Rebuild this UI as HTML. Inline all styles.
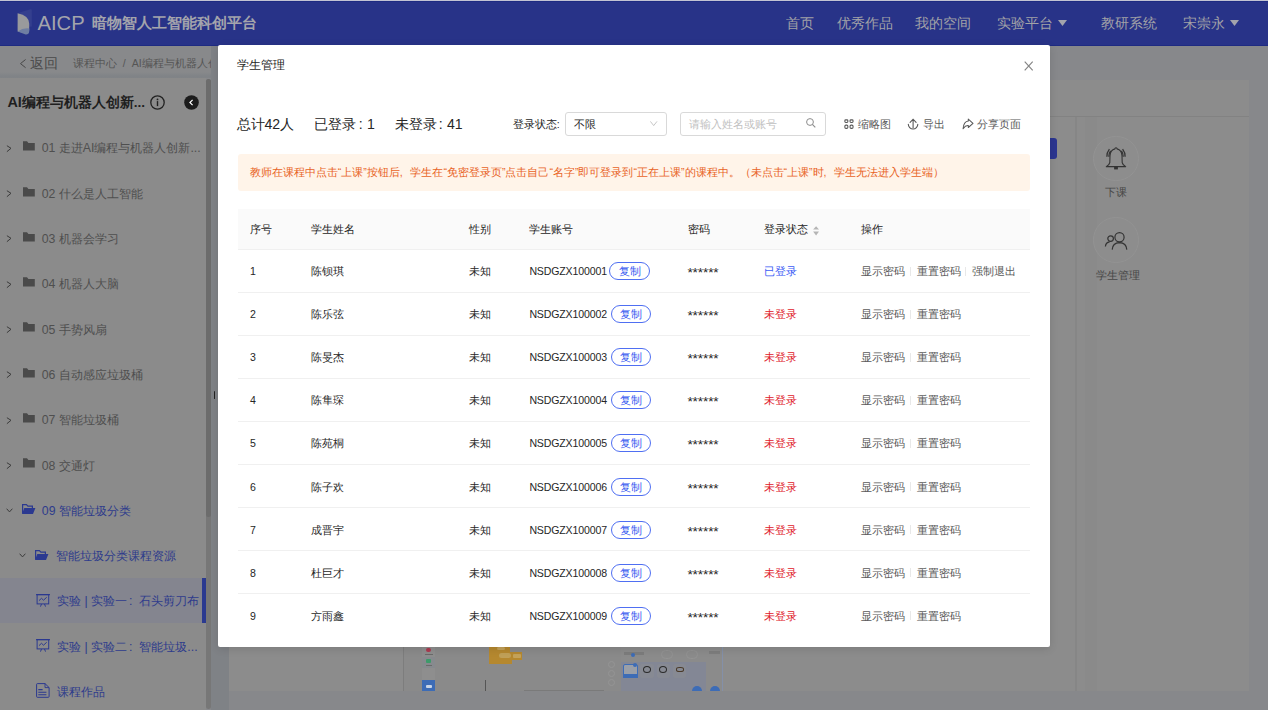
<!DOCTYPE html>
<html><head><meta charset="utf-8">
<style>
*{margin:0;padding:0;box-sizing:border-box}
html,body{width:1268px;height:710px;overflow:hidden;background:#87888b;font-family:"Liberation Sans",sans-serif;}
.a,.m{position:absolute;white-space:nowrap}
#topline{left:0;top:0;width:1268px;height:1px;background:#c2c3d3}
#hdr{left:0;top:1px;width:1268px;height:45px;background:#283388;border-top:1px solid #1e2b82;border-bottom:1px solid #1e2b82}
.hd{color:#a2a2a7;font-size:13.65px;line-height:16px;top:15.6px}
#crumb{left:0;top:46px;width:213px;height:32px;background:linear-gradient(#88898b 0,#88898b 26px,#808387 30px,#818487 33px)}
#side{left:0;top:78px;width:206px;height:632px;background:#8b8b8b}
#card{left:229px;top:80px;width:1020px;height:611px;background:#8c8c8c}
#modal{left:218px;top:45px;width:832px;height:602px;background:#fff;border-radius:2px;overflow:hidden;box-shadow:0 2px 8px rgba(0,0,0,.12)}
.t12{font-size:10.57px;line-height:14px}
.sb{color:#4f4f4f;font-size:12.3px;line-height:16px}
.sbl{color:#2e3b8c;font-size:12.3px;line-height:16px}
.st{font-size:14.09px;line-height:18px;color:#262626;top:70px}
.tool{font-size:10.57px;line-height:14px;color:#595959;top:72px}
.th{font-size:10.57px;line-height:14px;color:#262626}
.td{font-size:10.57px;line-height:14px;color:#262626}
.op{font-size:10.57px;line-height:14px;color:#595959}
.copy{border:1px solid #4f6ff2;border-radius:9px;width:40.5px;height:18px;color:#3858f0;font-size:10.57px;line-height:16px;text-align:center;font-weight:500}
.line{height:1px;background:#f0f0f0}
</style></head><body>
<div class="a" id="topline"></div>
<div class="a" id="hdr"></div>
<svg class="a" style="left:0;top:0" width="45" height="45" viewBox="0 0 45 45">
  <path d="M19.5 12.5L30.4 9.3Q31.8 9 31.8 10.4V26.5L19.5 28Z" fill="#343f8e"/>
  <path d="M17.6 13.3Q29.2 15.6 29.2 23.8V30Q29.2 33.2 26 33.2L17.6 31.6Z" fill="#999a9c"/>
  <path d="M17.6 31.4Q23 27.6 29.2 28.4V31.6Q29 34.8 25.6 34.6Z" fill="#6f7ea2"/>
</svg>
<div class="a" style="left:37.5px;top:10.7px;font-size:20.2px;line-height:24px;color:#a3a4ac">AICP</div>
<div class="a" style="left:92px;top:13px;font-size:15.1px;line-height:19px;color:#a3a4ac;font-weight:bold">暗物智人工智能科创平台</div>
<div class="a hd" style="left:786px">首页</div>
<div class="a hd" style="left:837px">优秀作品</div>
<div class="a hd" style="left:915px">我的空间</div>
<div class="a hd" style="left:997px">实验平台</div>
<svg class="a" style="left:1058px;top:20px" width="9" height="7"><path d="M0 0H9L4.5 6Z" fill="#a3a4ac"/></svg>
<div class="a hd" style="left:1101px">教研系统</div>
<div class="a hd" style="left:1183px">宋崇永</div>
<svg class="a" style="left:1230px;top:20px" width="9" height="7"><path d="M0 0H9L4.5 6Z" fill="#a3a4ac"/></svg>

<div class="a" id="crumb"></div>
<svg class="a" style="left:19px;top:58px" width="8" height="11" viewBox="0 0 8 11"><path d="M6.6 1.5L1.5 5.6L6.6 9.7" fill="none" stroke="#474747" stroke-width="1"/></svg>
<div class="a" style="left:30.3px;top:53.5px;font-size:14.09px;line-height:18px;color:#4a4a4a">返回</div>
<div class="a" style="left:73px;top:57px;font-size:10.57px;line-height:13px;color:#555">课程中心 &nbsp;/&nbsp; AI编程与机器人创新</div>
<div class="a" id="side"></div>
<div class="a" id="card"></div>
<div class="a" style="left:229px;top:116px;width:1020px;height:1px;background:#828282"></div>
<div class="a" style="left:1075px;top:117px;width:2px;height:574px;background:#868686"></div>
<div class="a" style="left:1085px;top:117px;width:12px;height:574px;background:#8a8a8a"></div>
<div class="a" style="left:1043px;top:138px;width:14px;height:21px;background:#2b3590;border-radius:3px"></div>
<div class="a" style="left:1093.2px;top:135.8px;width:45.6px;height:45.6px;border-radius:50%;border:1px solid #939393;background:#8d8d8d"></div>
<div class="a" style="left:1093.2px;top:217.4px;width:45.6px;height:45.6px;border-radius:50%;border:1px solid #939393;background:#8d8d8d"></div>
<svg class="a" style="left:1104px;top:146px" width="24" height="25" viewBox="0 0 24 25"><g fill="none" stroke="#333" stroke-width="1.1" stroke-linejoin="round"><path d="M11.9 1.7Q11 1.7 10.9 2.9Q6.4 4 6 9.6L5.8 16.6Q5.5 18.6 2.3 20.6H21.7Q18.5 18.6 18.2 16.6L18 9.6Q17.6 4 13.1 2.9Q13 1.7 12.1 1.7Z"/><path d="M2.9 10.8Q2.7 6.4 5.4 3.1M4.8 10.8Q4.7 7.4 6.6 4.9M21.1 10.8Q21.3 6.4 18.6 3.1M19.2 10.8Q19.3 7.4 17.4 4.9" stroke-width="1.3"/></g><rect x="10.1" y="20.6" width="3.8" height="2.8" fill="#333"/></svg>
<div class="a" style="left:1105px;top:184.3px;font-size:10.57px;line-height:16px;color:#474747">下课</div>
<svg class="a" style="left:1103.5px;top:230.5px" width="26" height="20" viewBox="0 0 26 20"><g fill="none" stroke="#333" stroke-width="1.2"><circle cx="15.5" cy="6.3" r="4.6"/><path d="M8.2 18.6Q8.6 11.9 15.5 11.7Q22.4 11.9 22.8 18.6"/><circle cx="6.6" cy="7.6" r="2.8"/><path d="M1.4 15.5Q1.8 11.4 5.6 10.9"/></g></svg>
<div class="a" style="left:1095.5px;top:266.8px;font-size:10.57px;line-height:16px;color:#474747">学生管理</div>
<div class="a" style="left:403px;top:600px;width:321px;height:91px;overflow:hidden">
<div class="a" style="left:0px;top:0px;width:320px;height:91px;background:#8a8a8a;border-left:1px solid #7d7d7d"></div>
<div class="a" style="left:19px;top:0px;width:13px;height:91px;background:#8e8e8e"></div>
<div class="a" style="left:19px;top:57px;width:13px;height:11px;background:#878a8e"></div>
<div class="a" style="left:19px;top:80px;width:13px;height:11.5px;background:#3d6cb6"></div>
<div class="a" style="left:23.3px;top:47.6px;width:4.6px;height:4.6px;border-radius:50%;background:#ad3a50"></div>
<div class="a" style="left:21.5px;top:54px;width:8px;height:1.2px;background:#6a6a6a"></div>
<div class="a" style="left:22.5px;top:64.8px;width:6px;height:1.2px;background:#6a6a6a"></div>
<div class="a" style="left:23px;top:84.5px;width:6px;height:3px;background:#c8d4e6;border-radius:1px"></div>
<div class="a" style="left:23px;top:59px;width:5px;height:3.5px;border-radius:1px;background:#3d9a6a"></div>
<div class="a" style="left:82px;top:80px;width:1px;height:11px;background:#555"></div>
<div class="a" style="left:86.3px;top:0px;width:20.5px;height:52px;background:#b5882f"></div>
<div class="a" style="left:86.3px;top:52px;width:33px;height:7.5px;background:#b5882f"></div>
<div class="a" style="left:86.3px;top:59.5px;width:22.4px;height:4.2px;background:#b5882f"></div>
<div class="a" style="left:94px;top:47px;width:8px;height:3px;background:#c4a25a;border-radius:2px"></div>
<div class="a" style="left:96px;top:53.3px;width:12px;height:4.5px;background:#c0a058;border-radius:3px"></div>
<div class="a" style="left:109.5px;top:53.5px;width:8px;height:4px;background:#c4a25a;border-radius:1px"></div>
<div class="a" style="left:121px;top:89.5px;width:80px;height:1.5px;background:#7a7a7a"></div>
<div class="a" style="left:204.5px;top:61px;width:7px;height:7px;border-radius:50%;border:1px solid #959595"></div>
<div class="a" style="left:204.5px;top:70.4px;width:7px;height:7px;border-radius:50%;border:1px solid #959595"></div>
<div class="a" style="left:204.5px;top:79.3px;width:7px;height:7px;border-radius:50%;border:1px solid #959595"></div>
<div class="a" style="left:217.5px;top:0px;width:85.6px;height:91px;background:#838795"></div>
<div class="a" style="left:218px;top:0px;width:84.5px;height:62px;background:#8b8b8b"></div>
<div class="a" style="left:221px;top:52px;width:20px;height:3px;background:#7c7c7c"></div>
<div class="a" style="left:228px;top:53px;width:4px;height:4px;border-radius:50%;background:#3d6cb6"></div>
<div class="a" style="left:258px;top:50px;width:12px;height:9px;border-radius:5px;border:1px solid #939393"></div>
<div class="a" style="left:283px;top:50px;width:12px;height:9px;border-radius:5px;border:1px solid #939393"></div>
<div class="a" style="left:220px;top:64px;width:14.5px;height:14px;background:#9a9fa8;border:1px solid #3d6cb6;border-radius:2px"></div>
<div class="a" style="left:220px;top:74px;width:14.5px;height:4px;background:#3d6cb6"></div>
<div class="a" style="left:230px;top:63px;width:4px;height:4px;border-radius:50%;background:#3d6cb6"></div>
<div class="a" style="left:237px;top:64px;width:13.8px;height:14px;background:#878a93;border-radius:2px"></div>
<div class="a" style="left:253.5px;top:64px;width:13.5px;height:14px;background:#878a93;border-radius:2px"></div>
<div class="a" style="left:269.5px;top:64px;width:13.5px;height:14px;background:#878a93;border-radius:2px"></div>
<div class="a" style="left:239.5px;top:65.5px;width:8px;height:7px;border-radius:50%;border:1.5px solid #2a2a2a"></div>
<div class="a" style="left:256px;top:65.5px;width:8px;height:7px;border-radius:50%;border:1.5px solid #2a2a2a"></div>
<div class="a" style="left:272.5px;top:66.5px;width:8px;height:5px;border-radius:40%;border:1.5px solid #4a3a2a"></div>
<div class="a" style="left:303px;top:0px;width:17px;height:91px;background:#8b8b8b;border-right:1px solid #8490a8"></div>
<div class="a" style="left:306px;top:51px;width:11px;height:3px;background:#7d7d7d"></div>
<div class="a" style="left:289px;top:86px;width:10px;height:10px;border-radius:50%;background:#3d6cb6"></div>
<div class="a" style="left:306.8px;top:86px;width:10px;height:10px;border-radius:50%;background:#3d6cb6"></div>
</div>
<div class="a" style="left:210px;top:691px;width:1058px;height:19px;background:#87888b"></div>

<div class="a" style="left:7.4px;top:93.3px;font-size:13.6px;line-height:18px;color:#1f1f1f;font-weight:bold"><span style="font-size:14.4px">AI</span>编程与机器人创新...</div>
<svg class="a" style="left:149.5px;top:94.5px" width="15" height="15" viewBox="0 0 15 15"><circle cx="7.5" cy="7.5" r="6.7" fill="none" stroke="#222" stroke-width="1.3"/><circle cx="7.5" cy="4.4" r="0.9" fill="#222"/><rect x="6.8" y="6.1" width="1.4" height="5" fill="#222"/></svg>
<svg class="a" style="left:183.5px;top:94.5px" width="15" height="15" viewBox="0 0 15 15"><circle cx="7.5" cy="7.5" r="7.3" fill="#1c1c1c"/><path d="M8.6 4.8L5.9 7.5L8.6 10.2" fill="none" stroke="#fff" stroke-width="1.2"/></svg>
<svg class="a" style="left:6px;top:144.7px" width="6" height="8" viewBox="0 0 6 8"><path d="M0.9 0.7L5 3.3L0.9 6.7" fill="none" stroke="#3c3c3c" stroke-width="1"/></svg>
<svg class="a" style="left:22.9px;top:141.2px" width="12" height="10" viewBox="0 0 12 10"><path d="M0 0.2H4L5.4 2.1H11.8V9.6H0Z" fill="#4a4a4a"/></svg>
<div class="a sb" style="left:41.7px;top:140.4px">01 走进AI编程与机器人创新...</div>
<svg class="a" style="left:6px;top:190.0px" width="6" height="8" viewBox="0 0 6 8"><path d="M0.9 0.7L5 3.3L0.9 6.7" fill="none" stroke="#3c3c3c" stroke-width="1"/></svg>
<svg class="a" style="left:22.9px;top:186.5px" width="12" height="10" viewBox="0 0 12 10"><path d="M0 0.2H4L5.4 2.1H11.8V9.6H0Z" fill="#4a4a4a"/></svg>
<div class="a sb" style="left:41.7px;top:185.7px">02 什么是人工智能</div>
<svg class="a" style="left:6px;top:235.3px" width="6" height="8" viewBox="0 0 6 8"><path d="M0.9 0.7L5 3.3L0.9 6.7" fill="none" stroke="#3c3c3c" stroke-width="1"/></svg>
<svg class="a" style="left:22.9px;top:231.8px" width="12" height="10" viewBox="0 0 12 10"><path d="M0 0.2H4L5.4 2.1H11.8V9.6H0Z" fill="#4a4a4a"/></svg>
<div class="a sb" style="left:41.7px;top:231.0px">03 机器会学习</div>
<svg class="a" style="left:6px;top:280.6px" width="6" height="8" viewBox="0 0 6 8"><path d="M0.9 0.7L5 3.3L0.9 6.7" fill="none" stroke="#3c3c3c" stroke-width="1"/></svg>
<svg class="a" style="left:22.9px;top:277.1px" width="12" height="10" viewBox="0 0 12 10"><path d="M0 0.2H4L5.4 2.1H11.8V9.6H0Z" fill="#4a4a4a"/></svg>
<div class="a sb" style="left:41.7px;top:276.3px">04 机器人大脑</div>
<svg class="a" style="left:6px;top:325.9px" width="6" height="8" viewBox="0 0 6 8"><path d="M0.9 0.7L5 3.3L0.9 6.7" fill="none" stroke="#3c3c3c" stroke-width="1"/></svg>
<svg class="a" style="left:22.9px;top:322.4px" width="12" height="10" viewBox="0 0 12 10"><path d="M0 0.2H4L5.4 2.1H11.8V9.6H0Z" fill="#4a4a4a"/></svg>
<div class="a sb" style="left:41.7px;top:321.6px">05 手势风扇</div>
<svg class="a" style="left:6px;top:371.2px" width="6" height="8" viewBox="0 0 6 8"><path d="M0.9 0.7L5 3.3L0.9 6.7" fill="none" stroke="#3c3c3c" stroke-width="1"/></svg>
<svg class="a" style="left:22.9px;top:367.7px" width="12" height="10" viewBox="0 0 12 10"><path d="M0 0.2H4L5.4 2.1H11.8V9.6H0Z" fill="#4a4a4a"/></svg>
<div class="a sb" style="left:41.7px;top:366.9px">06 自动感应垃圾桶</div>
<svg class="a" style="left:6px;top:416.5px" width="6" height="8" viewBox="0 0 6 8"><path d="M0.9 0.7L5 3.3L0.9 6.7" fill="none" stroke="#3c3c3c" stroke-width="1"/></svg>
<svg class="a" style="left:22.9px;top:413.0px" width="12" height="10" viewBox="0 0 12 10"><path d="M0 0.2H4L5.4 2.1H11.8V9.6H0Z" fill="#4a4a4a"/></svg>
<div class="a sb" style="left:41.7px;top:412.2px">07 智能垃圾桶</div>
<svg class="a" style="left:6px;top:461.8px" width="6" height="8" viewBox="0 0 6 8"><path d="M0.9 0.7L5 3.3L0.9 6.7" fill="none" stroke="#3c3c3c" stroke-width="1"/></svg>
<svg class="a" style="left:22.9px;top:458.3px" width="12" height="10" viewBox="0 0 12 10"><path d="M0 0.2H4L5.4 2.1H11.8V9.6H0Z" fill="#4a4a4a"/></svg>
<div class="a sb" style="left:41.7px;top:457.5px">08 交通灯</div>
<div class="a" style="left:0;top:578px;width:206.4px;height:45px;background:#84858f"></div>
<div class="a" style="left:201.9px;top:578px;width:4.5px;height:45px;background:#2b3a90"></div>
<svg class="a" style="left:5.6px;top:508.0px" width="7" height="5" viewBox="0 0 7 5"><path d="M0.6 0.7L3.5 3.9L6.4 0.7" fill="none" stroke="#3c3c3c" stroke-width="1"/></svg>
<svg class="a" style="left:21.9px;top:504.2px" width="14" height="10" viewBox="0 0 14 10"><path d="M0.6 9.6V0.6H4.4L5.9 2.1H10.4V4.5" fill="none" stroke="#2b3990" stroke-width="1.2"/><path d="M2.3 4.1H13.4L11 9.9H0Z" fill="#2b3990"/></svg>
<div class="a sbl" style="left:41.8px;top:502.8px">09 智能垃圾分类</div>
<svg class="a" style="left:19px;top:553.3px" width="7" height="5" viewBox="0 0 7 5"><path d="M0.6 0.7L3.5 3.9L6.4 0.7" fill="none" stroke="#3c3c3c" stroke-width="1"/></svg>
<svg class="a" style="left:35.2px;top:549.5px" width="14" height="10" viewBox="0 0 14 10"><path d="M0.6 9.6V0.6H4.4L5.9 2.1H10.4V4.5" fill="none" stroke="#2b3990" stroke-width="1.2"/><path d="M2.3 4.1H13.4L11 9.9H0Z" fill="#2b3990"/></svg>
<div class="a sbl" style="left:55.8px;top:548.1px">智能垃圾分类课程资源</div>
<svg class="a" style="left:36px;top:594.0px" width="14" height="13" viewBox="0 0 14 13"><g fill="none" stroke="#2b3990" stroke-width="1"><path d="M0.1 0.6H13.9" stroke-width="1.3"/><rect x="1.1" y="0.6" width="11.6" height="9.3"/><path d="M5.5 10L4.5 12.6M8.5 10L9.5 12.6"/><path d="M3 6.6L5.5 4.3L7.5 6.2L10.7 3.3"/></g></svg>
<div class="a sbl" style="left:57px;top:593.4px">实验 | 实验一<span style="display:inline-block;width:12.33px;padding-left:2px">:</span>石头剪刀布</div>
<svg class="a" style="left:36px;top:639.3px" width="14" height="13" viewBox="0 0 14 13"><g fill="none" stroke="#2b3990" stroke-width="1"><path d="M0.1 0.6H13.9" stroke-width="1.3"/><rect x="1.1" y="0.6" width="11.6" height="9.3"/><path d="M5.5 10L4.5 12.6M8.5 10L9.5 12.6"/><path d="M3 6.6L5.5 4.3L7.5 6.2L10.7 3.3"/></g></svg>
<div class="a sbl" style="left:57px;top:638.7px">实验 | 实验二<span style="display:inline-block;width:12.33px;padding-left:2px">:</span>智能垃圾...</div>
<svg class="a" style="left:36px;top:682.8px" width="14" height="15" viewBox="0 0 14 15"><g fill="none" stroke="#2b3990" stroke-width="1"><path d="M1.4 0.6H9L13.1 4.6V13.5Q13.1 14.3 12.3 14.3H1.4Q0.6 14.3 0.6 13.5V1.4Q0.6 0.6 1.4 0.6Z"/><path d="M9 0.6V4.6H13.1" stroke-width="0.9"/><path d="M2.3 6.6H6.6M2.3 9.3H10.4M2.3 11.8H10.4" stroke-width="1.1"/></g></svg>
<div class="a sbl" style="left:57px;top:684.0px">课程作品</div>
<div class="a" style="left:206.1px;top:79px;width:4.8px;height:630px;background:#777;border-radius:3px"></div><div class="a" style="left:206.1px;top:79px;width:4.8px;height:438px;background:#6c6c6c;border-radius:3px"></div>
<div class="a" style="left:210.9px;top:46px;width:18.1px;height:664px;background:#7f8286"></div>
<div class="a" style="left:213.9px;top:390.8px;width:1.3px;height:8px;background:#222;border-radius:1px"></div>
<div class="a" id="modal">
<div class="m" style="left:19px;top:12px;font-size:12.33px;line-height:16px;color:#262626">学生管理</div>
<svg class="m" style="left:806.2px;top:15.8px" width="9.4" height="10.2" viewBox="0 0 9.4 10.2"><path d="M0.7 0.7L8.7 9.5M8.7 0.7L0.7 9.5" stroke="#858585" stroke-width="1.15"/></svg>
<div class="m st" style="left:18.5px">总计42人</div>
<div class="m st" style="left:96px">已登录<span style="display:inline-block;width:11px;padding-left:2.8px">:</span>1</div>
<div class="m st" style="left:176.5px">未登录<span style="display:inline-block;width:10.4px;padding-left:2.2px">:</span>41</div>
<div class="m t12" style="left:294.8px;top:72px;color:#262626">登录状态:</div>
<div class="m" style="left:347.3px;top:67px;width:102px;height:23.5px;border:1px solid #d9d9d9;border-radius:3px"></div>
<div class="m t12" style="left:356px;top:72px;color:#262626">不限</div>
<svg class="m" style="left:432.3px;top:76.2px" width="8" height="6" viewBox="0 0 8 6"><path d="M0.4 0.4L3.7 4.6L7 0.4" fill="none" stroke="#bfbfbf" stroke-width="0.9"/></svg>
<div class="m" style="left:462.1px;top:67px;width:146.3px;height:23.5px;border:1px solid #d9d9d9;border-radius:3px"></div>
<div class="m t12" style="left:471px;top:72px;color:#bfbfbf">请输入姓名或账号</div>
<svg class="m" style="left:588.2px;top:73.2px" width="10" height="10" viewBox="0 0 10 10"><circle cx="4" cy="4" r="3.4" fill="none" stroke="#8c8c8c" stroke-width="1"/><path d="M6.4 6.4L9.3 9.3" stroke="#8c8c8c" stroke-width="1.1"/></svg>
<svg class="m" style="left:625.5px;top:73.8px" width="11" height="11" viewBox="0 0 11 11"><g fill="none" stroke="#5a5a5a" stroke-width="1.1"><rect x="0.85" y="0.85" width="3.0" height="2.6" rx="0.9"/><rect x="6.05" y="0.85" width="3.0" height="2.6" rx="0.9"/><rect x="0.85" y="6.15" width="3.0" height="3.2" rx="1.1"/><rect x="6.05" y="6.15" width="3.0" height="3.2" rx="1.1"/></g></svg>
<div class="m tool" style="left:640.3px">缩略图</div>
<svg class="m" style="left:689px;top:73px" width="12" height="12" viewBox="0 0 12 12"><g fill="none" stroke="#595959" stroke-width="1.1" stroke-linecap="round"><path d="M1.3 6.3A4.75 4.75 0 0 0 10.8 6.3"/><path d="M6.1 9.7V1.4M3.1 4.4L6.1 1.2L9.1 4.4"/></g></svg>
<div class="m tool" style="left:705px">导出</div>
<svg class="m" style="left:744px;top:73px" width="12" height="12" viewBox="0 0 12 12"><path d="M1.1 10.7C1.5 6 3.5 3.3 6.3 3.1V1.1L11 5.4L6.3 9.5V7.6C4.5 7.3 2.8 8.3 1.1 10.7Z" fill="none" stroke="#595959" stroke-width="1.05" stroke-linejoin="round"/></svg>
<div class="m tool" style="left:759.4px">分享页面</div>
<div class="m" style="left:20px;top:109px;width:792px;height:36.7px;background:#fff4e9;border-radius:3px"></div>
<div class="m t12" style="left:31.8px;top:119.7px;color:#e8631f">教师在课程中点击“上课”按钮后<span style="display:inline-block;width:10.57px">,</span>学生在“免密登录页”点击自己“名字”即可登录到“正在上课”的课程中。（未点击“上课”时<span style="display:inline-block;width:10.57px">,</span>学生无法进入学生端）</div>
<div class="m" style="left:20px;top:164px;width:792px;height:40px;background:#fafafa"></div>
<div class="m line" style="left:20px;top:204px;width:792px"></div>
<div class="m th" style="left:32px;top:177px">序号</div>
<div class="m th" style="left:92.6px;top:177px">学生姓名</div>
<div class="m th" style="left:250.7px;top:177px">性别</div>
<div class="m th" style="left:311.4px;top:177px">学生账号</div>
<div class="m th" style="left:469.9px;top:177px">密码</div>
<div class="m th" style="left:545.6px;top:177px">登录状态</div>
<div class="m th" style="left:643.4px;top:177px">操作</div>
<svg class="m" style="left:594.8px;top:180.5px" width="6.2" height="10" viewBox="0 0 6.2 10"><path d="M3.1 0.2L6.1 3.6H0.1Z M3.1 9.5L6.1 5.5H0.1Z" fill="#b5b5b5"/></svg>
<div class="m td" style="left:32px;top:219.0px">1</div>
<div class="m td" style="left:92.6px;top:219.0px">陈钡琪</div>
<div class="m td" style="left:250.7px;top:219.0px">未知</div>
<div class="m td" style="left:311.4px;top:219.0px;letter-spacing:-0.15px">NSDGZX100001</div>
<div class="m copy" style="left:391.3px;top:217.0px">复制</div>
<div class="m td" style="left:469.4px;top:221.0px;font-size:13.6px;letter-spacing:-0.1px">******</div>
<div class="m td" style="left:545.6px;top:219.0px;color:#3d5cf5">已登录</div>
<div class="m op" style="left:643.4px;top:219.0px">显示密码</div>
<div class="m" style="left:691.6px;top:221.5px;width:1px;height:9px;background:#e8e8e8"></div>
<div class="m op" style="left:698.7px;top:219.0px">重置密码</div>
<div class="m" style="left:746.7px;top:221.5px;width:1px;height:9px;background:#e8e8e8"></div>
<div class="m op" style="left:753.8px;top:219.0px">强制退出</div>
<div class="m line" style="left:20px;top:247px;width:792px"></div>
<div class="m td" style="left:32px;top:262.1px">2</div>
<div class="m td" style="left:92.6px;top:262.1px">陈乐弦</div>
<div class="m td" style="left:250.7px;top:262.1px">未知</div>
<div class="m td" style="left:311.4px;top:262.1px;letter-spacing:-0.15px">NSDGZX100002</div>
<div class="m copy" style="left:392.9px;top:260.1px">复制</div>
<div class="m td" style="left:469.4px;top:264.1px;font-size:13.6px;letter-spacing:-0.1px">******</div>
<div class="m td" style="left:545.6px;top:262.1px;color:#e0202a">未登录</div>
<div class="m op" style="left:643.4px;top:262.1px">显示密码</div>
<div class="m" style="left:691.6px;top:264.6px;width:1px;height:9px;background:#e8e8e8"></div>
<div class="m op" style="left:698.7px;top:262.1px">重置密码</div>
<div class="m line" style="left:20px;top:290px;width:792px"></div>
<div class="m td" style="left:32px;top:305.2px">3</div>
<div class="m td" style="left:92.6px;top:305.2px">陈旻杰</div>
<div class="m td" style="left:250.7px;top:305.2px">未知</div>
<div class="m td" style="left:311.4px;top:305.2px;letter-spacing:-0.15px">NSDGZX100003</div>
<div class="m copy" style="left:392.9px;top:303.2px">复制</div>
<div class="m td" style="left:469.4px;top:307.2px;font-size:13.6px;letter-spacing:-0.1px">******</div>
<div class="m td" style="left:545.6px;top:305.2px;color:#e0202a">未登录</div>
<div class="m op" style="left:643.4px;top:305.2px">显示密码</div>
<div class="m" style="left:691.6px;top:307.7px;width:1px;height:9px;background:#e8e8e8"></div>
<div class="m op" style="left:698.7px;top:305.2px">重置密码</div>
<div class="m line" style="left:20px;top:333px;width:792px"></div>
<div class="m td" style="left:32px;top:348.3px">4</div>
<div class="m td" style="left:92.6px;top:348.3px">陈隼琛</div>
<div class="m td" style="left:250.7px;top:348.3px">未知</div>
<div class="m td" style="left:311.4px;top:348.3px;letter-spacing:-0.15px">NSDGZX100004</div>
<div class="m copy" style="left:392.9px;top:346.3px">复制</div>
<div class="m td" style="left:469.4px;top:350.3px;font-size:13.6px;letter-spacing:-0.1px">******</div>
<div class="m td" style="left:545.6px;top:348.3px;color:#e0202a">未登录</div>
<div class="m op" style="left:643.4px;top:348.3px">显示密码</div>
<div class="m" style="left:691.6px;top:350.8px;width:1px;height:9px;background:#e8e8e8"></div>
<div class="m op" style="left:698.7px;top:348.3px">重置密码</div>
<div class="m line" style="left:20px;top:376px;width:792px"></div>
<div class="m td" style="left:32px;top:391.4px">5</div>
<div class="m td" style="left:92.6px;top:391.4px">陈苑桐</div>
<div class="m td" style="left:250.7px;top:391.4px">未知</div>
<div class="m td" style="left:311.4px;top:391.4px;letter-spacing:-0.15px">NSDGZX100005</div>
<div class="m copy" style="left:392.9px;top:389.4px">复制</div>
<div class="m td" style="left:469.4px;top:393.4px;font-size:13.6px;letter-spacing:-0.1px">******</div>
<div class="m td" style="left:545.6px;top:391.4px;color:#e0202a">未登录</div>
<div class="m op" style="left:643.4px;top:391.4px">显示密码</div>
<div class="m" style="left:691.6px;top:393.9px;width:1px;height:9px;background:#e8e8e8"></div>
<div class="m op" style="left:698.7px;top:391.4px">重置密码</div>
<div class="m line" style="left:20px;top:419px;width:792px"></div>
<div class="m td" style="left:32px;top:434.5px">6</div>
<div class="m td" style="left:92.6px;top:434.5px">陈子欢</div>
<div class="m td" style="left:250.7px;top:434.5px">未知</div>
<div class="m td" style="left:311.4px;top:434.5px;letter-spacing:-0.15px">NSDGZX100006</div>
<div class="m copy" style="left:392.9px;top:432.5px">复制</div>
<div class="m td" style="left:469.4px;top:436.5px;font-size:13.6px;letter-spacing:-0.1px">******</div>
<div class="m td" style="left:545.6px;top:434.5px;color:#e0202a">未登录</div>
<div class="m op" style="left:643.4px;top:434.5px">显示密码</div>
<div class="m" style="left:691.6px;top:437.0px;width:1px;height:9px;background:#e8e8e8"></div>
<div class="m op" style="left:698.7px;top:434.5px">重置密码</div>
<div class="m line" style="left:20px;top:462px;width:792px"></div>
<div class="m td" style="left:32px;top:477.6px">7</div>
<div class="m td" style="left:92.6px;top:477.6px">成晋宇</div>
<div class="m td" style="left:250.7px;top:477.6px">未知</div>
<div class="m td" style="left:311.4px;top:477.6px;letter-spacing:-0.15px">NSDGZX100007</div>
<div class="m copy" style="left:392.9px;top:475.6px">复制</div>
<div class="m td" style="left:469.4px;top:479.6px;font-size:13.6px;letter-spacing:-0.1px">******</div>
<div class="m td" style="left:545.6px;top:477.6px;color:#e0202a">未登录</div>
<div class="m op" style="left:643.4px;top:477.6px">显示密码</div>
<div class="m" style="left:691.6px;top:480.1px;width:1px;height:9px;background:#e8e8e8"></div>
<div class="m op" style="left:698.7px;top:477.6px">重置密码</div>
<div class="m line" style="left:20px;top:505px;width:792px"></div>
<div class="m td" style="left:32px;top:520.7px">8</div>
<div class="m td" style="left:92.6px;top:520.7px">杜巨才</div>
<div class="m td" style="left:250.7px;top:520.7px">未知</div>
<div class="m td" style="left:311.4px;top:520.7px;letter-spacing:-0.15px">NSDGZX100008</div>
<div class="m copy" style="left:392.9px;top:518.7px">复制</div>
<div class="m td" style="left:469.4px;top:522.7px;font-size:13.6px;letter-spacing:-0.1px">******</div>
<div class="m td" style="left:545.6px;top:520.7px;color:#e0202a">未登录</div>
<div class="m op" style="left:643.4px;top:520.7px">显示密码</div>
<div class="m" style="left:691.6px;top:523.2px;width:1px;height:9px;background:#e8e8e8"></div>
<div class="m op" style="left:698.7px;top:520.7px">重置密码</div>
<div class="m line" style="left:20px;top:548px;width:792px"></div>
<div class="m td" style="left:32px;top:563.8px">9</div>
<div class="m td" style="left:92.6px;top:563.8px">方雨鑫</div>
<div class="m td" style="left:250.7px;top:563.8px">未知</div>
<div class="m td" style="left:311.4px;top:563.8px;letter-spacing:-0.15px">NSDGZX100009</div>
<div class="m copy" style="left:392.9px;top:561.8px">复制</div>
<div class="m td" style="left:469.4px;top:565.8px;font-size:13.6px;letter-spacing:-0.1px">******</div>
<div class="m td" style="left:545.6px;top:563.8px;color:#e0202a">未登录</div>
<div class="m op" style="left:643.4px;top:563.8px">显示密码</div>
<div class="m" style="left:691.6px;top:566.3px;width:1px;height:9px;background:#e8e8e8"></div>
<div class="m op" style="left:698.7px;top:563.8px">重置密码</div>
</div>
</body></html>
